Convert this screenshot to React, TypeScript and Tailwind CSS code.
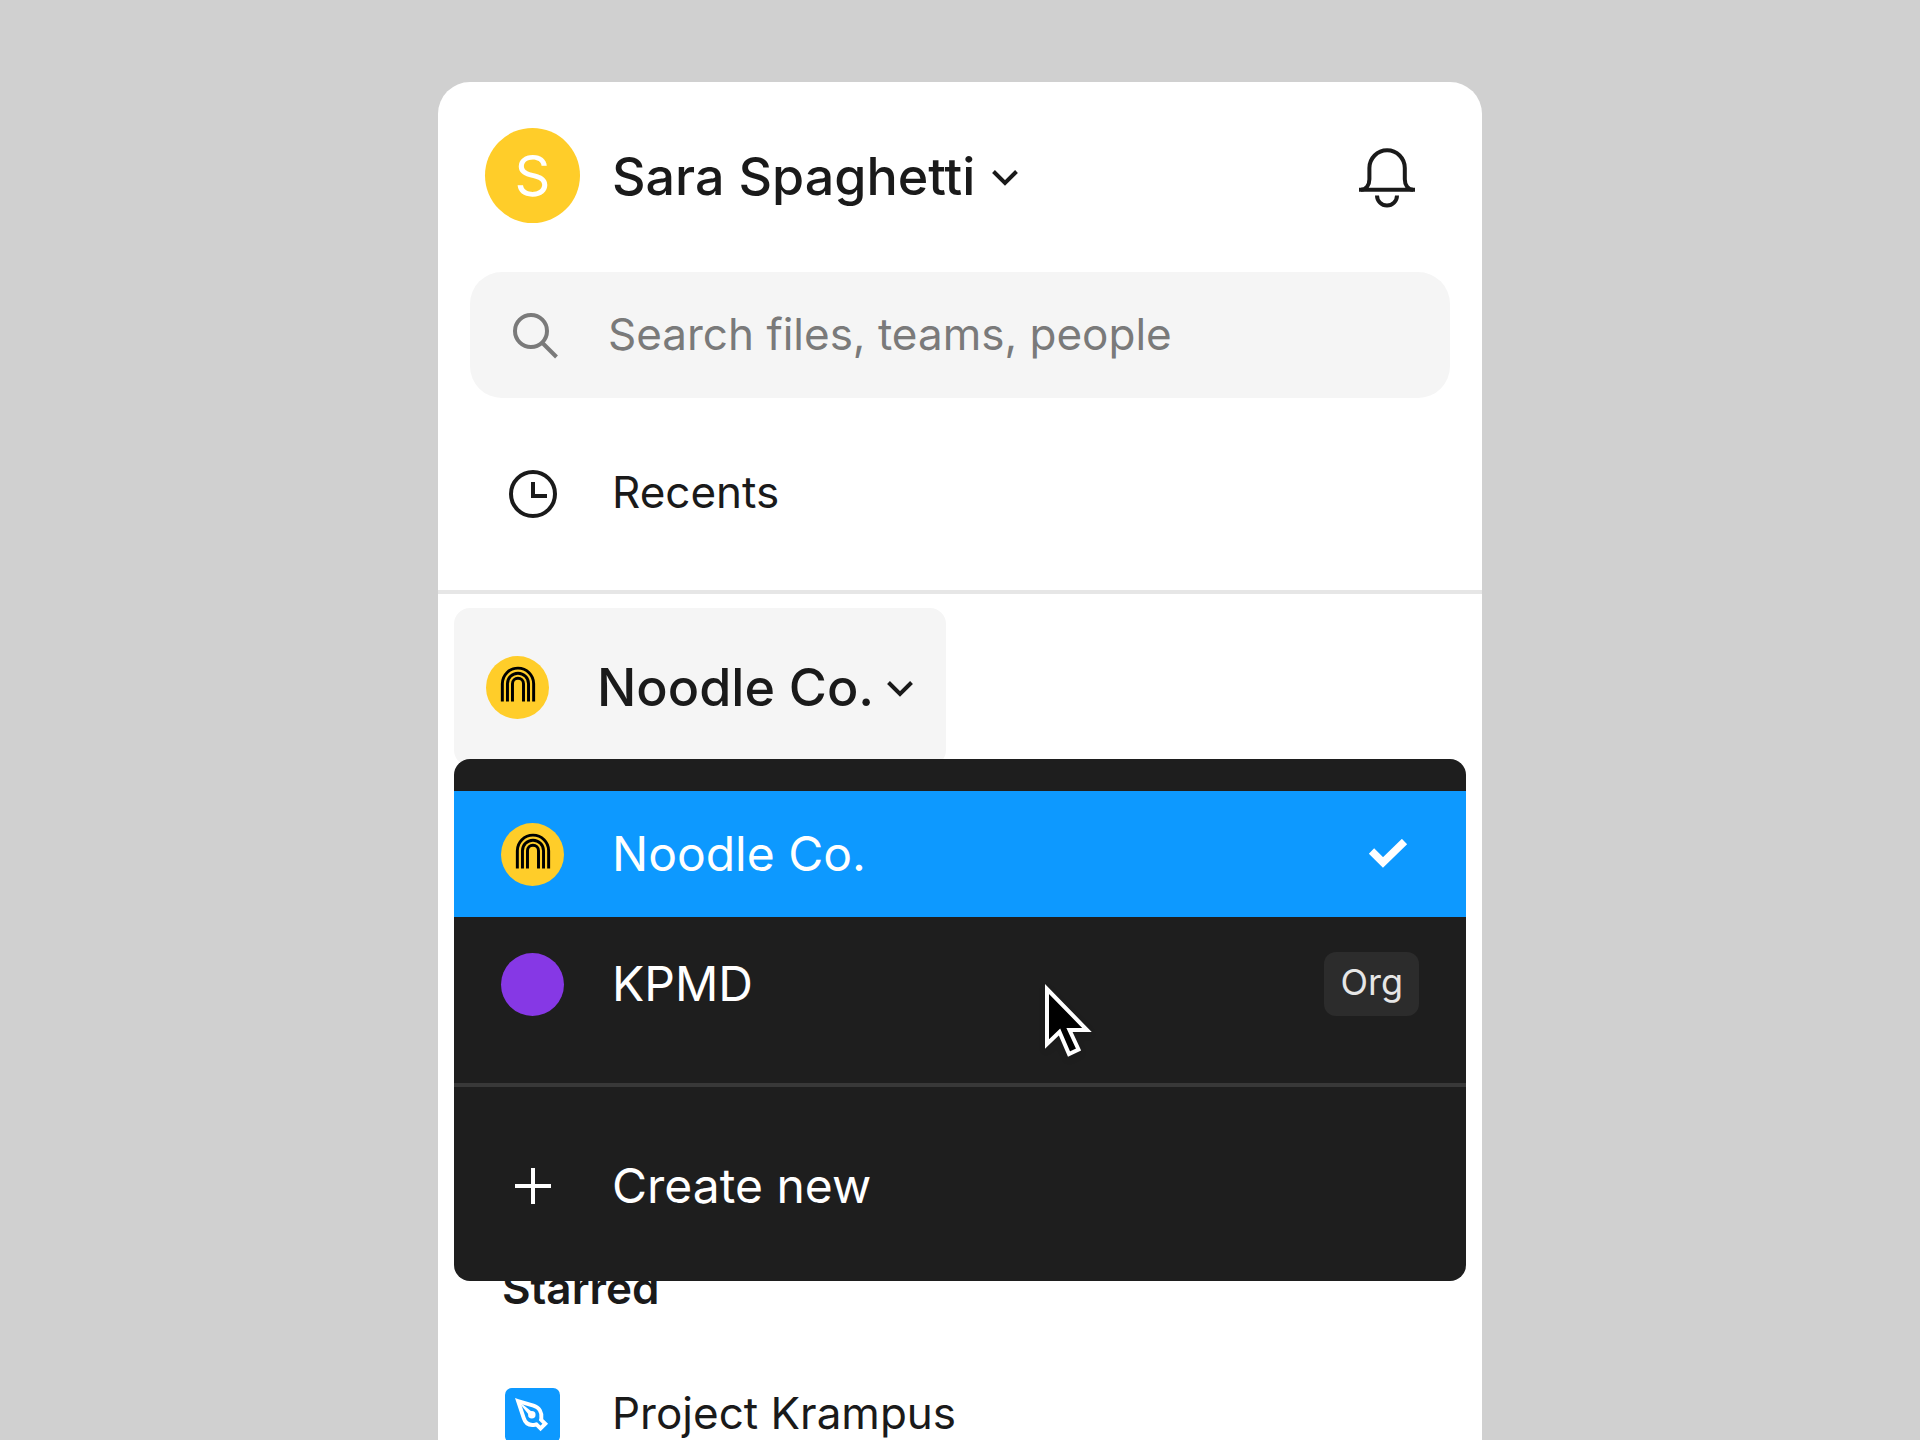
import { useState } from 'react';

// stacked arches, one continuous stroke per noodle
function NoodleLogo() {
  return (
    <svg viewBox="0 0 64 64" className="size-[63px] shrink-0" aria-hidden="true">
      <circle cx="32" cy="32" r="32" fill="#ffcd29" />
      <g fill="none" stroke="#000" strokeWidth="3">
        <path d="M16.6 46.2V28.2a15.900 15.900 0 0 1 31.800 0v18" />
        <path d="M21.800 46.200V28.200a10.700 10.700 0 0 1 21.400 0v18" />
        <path d="M26.900 46.200V28.200a5.600 5.600 0 0 1 11.200 0v18" />
      </g>
    </svg>
  );
}

function ChevronDown() {
  return (
    <svg viewBox="0 0 28 18" className="mt-1 h-[18px] w-7 shrink-0" fill="none" stroke="currentColor" strokeWidth="4" aria-hidden="true">
      <path d="M2.500 2.500l11.500 11.500 11.500-11.500" />
    </svg>
  );
}

function BellIcon() {
  return (
    <svg viewBox="0 0 56 60" className="h-[60px] w-14" fill="none" stroke="currentColor" strokeWidth="4" aria-hidden="true">
      <path d="M0 41.800h56" />
      <path d="M2 41.800c5 0 8.400-4.500 8.400-10.500V20a17.700 17.700 0 0 1 35.400 0v11.300c0 6 3.400 10.500 8.200 10.500" />
      <path d="M18 47.500a10 10 0 0 0 20 0" />
    </svg>
  );
}

function SearchIcon() {
  return (
    <svg viewBox="0 0 48 48" className="size-12 shrink-0" fill="none" stroke="currentColor" strokeWidth="4" aria-hidden="true">
      <circle cx="21" cy="20" r="16" />
      <path d="M32 31.500l14.500 14.500" />
    </svg>
  );
}

function ClockIcon() {
  return (
    <svg viewBox="0 0 48 48" className="size-12" fill="none" stroke="currentColor" strokeWidth="4" aria-hidden="true">
      <circle cx="24" cy="24" r="22" />
      <path d="M24 12v14h14" />
    </svg>
  );
}

function PlusIcon() {
  return (
    <svg viewBox="0 0 36 36" className="size-9" fill="none" stroke="currentColor" strokeWidth="4" aria-hidden="true">
      <path d="M18 0v36M0 18h36" />
    </svg>
  );
}

function CheckIcon() {
  return (
    <svg viewBox="0 0 40 30" className="h-[30px] w-10" fill="none" stroke="currentColor" strokeWidth="7.5" aria-hidden="true">
      <path d="M3.500 12L15 23.500 36.500 2.500" />
    </svg>
  );
}

function PenIcon() {
  return (
    <svg viewBox="0 0 56 56" className="size-[55px]" fill="none" aria-hidden="true">
      <rect width="56" height="56" rx="7" fill="#0d99ff" />
      <path
        d="M13.300 13.300L29 18c6 1.800 8.800 7 8 13l-.3 1.200 4.300 4.200-4.800 4.800-4.200-4.200-1.500.4c-5.500 1-9.800-1.400-11.500-7z"
        stroke="#fff"
        strokeWidth="4"
      />
      <path d="M12 12l15 12-3 3z" fill="#fff" />
      <circle cx="27.300" cy="27.300" r="3.800" fill="#fff" />
    </svg>
  );
}

function CursorArrow() {
  return (
    <svg
      viewBox="0 0 48 76"
      className="pointer-events-none absolute top-[225px] left-[590px] h-[76px] w-12 drop-shadow-md"
      aria-hidden="true"
    >
      <path
        d="M3 5v55l12.500-12 9.500 22 9.500-4.500-9-19.500h17.500z"
        fill="#000"
        stroke="#fff"
        strokeWidth="4"
      />
    </svg>
  );
}

export default function App() {
  const [open, setOpen] = useState(true);
  const [query, setQuery] = useState('');

  return (
    <div className="h-screen overflow-hidden bg-[#d0d0d0] px-6 pt-[82px] font-['Inter',sans-serif]">
      <aside className="mx-auto min-h-full max-w-[1044px] rounded-t-[32px] bg-white text-[#1a1a1a]">
        <header className="flex items-center justify-between pt-[46px] pr-[67px] pl-[47px]">
          <button className="flex items-center">
            <span className="flex size-[95px] items-center justify-center rounded-full bg-[#ffcd29] text-[56px] text-white">S</span>
            <span className="mr-4 ml-8 pt-0.5 text-[52px] font-medium">Sara Spaghetti</span>
            <ChevronDown />
          </button>
          <button aria-label="Notifications" className="pt-1"><BellIcon /></button>
        </header>

        <label className="mx-8 mt-[49px] flex h-[126px] items-center rounded-[32px] bg-[#f5f5f5] pl-10 text-[#7a7a7a]">
          <SearchIcon />
          <input
            type="text"
            aria-label="Search"
            value={query}
            onChange={(e) => setQuery(e.target.value)}
            placeholder="Search files, teams, people"
            className="ml-[50px] min-w-0 flex-1 bg-transparent pb-0.5 text-[44px] outline-none placeholder:text-[#7a7a7a]"
          />
        </label>

        <a href="#recents" className="mt-8 flex h-32 items-center pl-[47px]">
          <span className="flex w-[95px] justify-center"><ClockIcon /></span>
          <span className="ml-8 pb-1 text-[44px] leading-12">Recents</span>
        </a>

        <div className="mt-8 h-1 bg-[#e6e6e6]" />

        <div className="relative mx-4 mt-[14px] mb-[490px]">
          <button
            aria-expanded={open}
            onClick={() => setOpen(!open)}
            className="flex h-[158px] items-center rounded-2xl bg-[#f5f5f5] pr-8 pl-8"
          >
            <NoodleLogo />
            <span className="mr-3 ml-12 pt-0.5 text-[52px] font-medium">Noodle Co.</span>
            <ChevronDown />
          </button>

          {open && (
            <div role="menu" className="absolute inset-x-0 top-[151px] rounded-2xl bg-[#1e1e1e] pt-8 pb-7 text-[48px] text-white">
              <button role="menuitem" className="flex h-[126px] w-full items-center bg-[#0d99ff] pr-[58px] pl-[47px]">
                <NoodleLogo />
                <span className="ml-12">Noodle Co.</span>
                <span className="ml-auto"><CheckIcon /></span>
              </button>
              <button role="menuitem" className="flex h-[134px] w-full items-center px-[47px]">
                <span className="size-[63px] rounded-full bg-[#8638e5]" />
                <span className="ml-12">KPMD</span>
                <span className="ml-auto rounded-xl bg-[#2c2c2c] px-4 pb-1 text-[36px] leading-[60px] text-[#e6e6e6]">Org</span>
              </button>
              <div className="mt-8 mb-8 h-1 bg-[#383838]" />
              <button role="menuitem" className="flex h-[134px] w-full items-center pl-[47px]">
                <span className="flex w-[63px] justify-center"><PlusIcon /></span>
                <span className="ml-12">Create new</span>
              </button>
              <CursorArrow />
            </div>
          )}
        </div>

        <h2 className="pl-16 text-[44px] leading-16 font-semibold">Starred</h2>
        <a href="#krampus" className="mt-[31px] flex h-32 items-center pl-[47px]">
          <span className="flex w-[95px] justify-center"><PenIcon /></span>
          <span className="ml-8 pb-1 text-[44px] leading-12">Project Krampus</span>
        </a>
      </aside>
    </div>
  );
}
